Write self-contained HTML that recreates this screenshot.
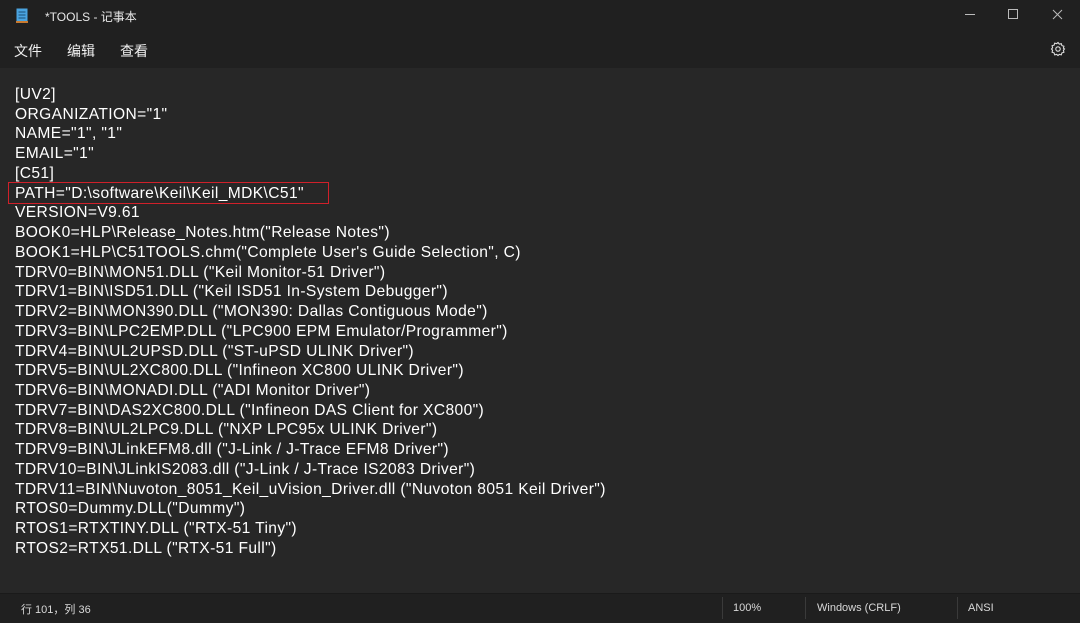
<!DOCTYPE html>
<html><head><meta charset="utf-8"><style>
*{margin:0;padding:0;box-sizing:border-box}
body{width:1080px;height:623px;background:#272727;font-family:"Segoe UI","Liberation Sans","Noto Sans CJK SC",sans-serif;color:#fff;position:relative;overflow:hidden}
.title{position:absolute;left:0;top:0;width:1080px;height:34px;background:#202020}
.menu{position:absolute;left:0;top:34px;width:1080px;height:34px;background:#202020}
.t{position:absolute;font-size:12px;color:#e8e8e8}
.m{position:absolute;top:41px;font-size:14px;color:#f0f0f0}
.ed{position:absolute;left:15px;top:85px;font-family:"Liberation Sans","Noto Sans CJK SC",sans-serif;font-size:15.6px;letter-spacing:0.38px;line-height:19.74px;white-space:pre;color:#fff}
.box{position:absolute;left:8px;top:182px;width:321px;height:22px;border:1.5px solid #d0202a}
.sb{position:absolute;left:0;top:593px;width:1080px;height:30px;background:#202020;border-top:1px solid #1a1a1a}
.s{position:absolute;top:602px;font-size:11px;color:#d8d8d8}
.sep{position:absolute;top:597px;width:1px;height:22px;background:#3a3a3a}
</style></head><body>
<div class="title"></div>
<svg style="position:absolute;left:16px;top:8px" width="12" height="15"><rect x="0.5" y="0.5" width="11" height="14" fill="#4aa3df"/><rect x="0" y="13" width="12" height="2" fill="#c87a30"/><line x1="2.5" y1="4" x2="9.5" y2="4" stroke="#1b4f77"/><line x1="2.5" y1="7" x2="9.5" y2="7" stroke="#1b4f77"/><line x1="2.5" y1="10" x2="9.5" y2="10" stroke="#1b4f77"/></svg>
<div class="t" style="left:45px;top:8px">*TOOLS - 记事本</div>
<svg style="position:absolute;left:960px;top:0" width="120" height="34" stroke="#bbb" fill="none" stroke-width="1"><line x1="5" y1="14.5" x2="15" y2="14.5"/><rect x="48.5" y="9.5" width="9" height="9"/><path d="M93 10l9 9M102 10l-9 9"/></svg>
<div class="menu"></div>
<div class="m" style="left:14px">文件</div>
<div class="m" style="left:67px">编辑</div>
<div class="m" style="left:120px">查看</div>
<svg style="position:absolute;left:1050px;top:41px" width="16" height="16" viewBox="0 0 16 16" fill="none" stroke="#ddd" stroke-width="1.1"><path d="M8 1.5l1.3 1.6 2-.5.6 2 2 .6-.5 2L14.5 8l-1.1 1.3.5 2-2 .6-.6 2-2-.5L8 14.5l-1.3-1.1-2 .5-.6-2-2-.6.5-2L1.5 8l1.1-1.3-.5-2 2-.6.6-2 2 .5z"/><circle cx="8" cy="8" r="2.2"/></svg>
<div class="ed">[UV2]
ORGANIZATION="1"
NAME="1", "1"
EMAIL="1"
[C51]
PATH="D:\software\Keil\Keil_MDK\C51"
VERSION=V9.61
BOOK0=HLP\Release_Notes.htm("Release Notes")
BOOK1=HLP\C51TOOLS.chm("Complete User's Guide Selection", C)
TDRV0=BIN\MON51.DLL ("Keil Monitor-51 Driver")
TDRV1=BIN\ISD51.DLL ("Keil ISD51 In-System Debugger")
TDRV2=BIN\MON390.DLL ("MON390: Dallas Contiguous Mode")
TDRV3=BIN\LPC2EMP.DLL ("LPC900 EPM Emulator/Programmer")
TDRV4=BIN\UL2UPSD.DLL ("ST-uPSD ULINK Driver")
TDRV5=BIN\UL2XC800.DLL ("Infineon XC800 ULINK Driver")
TDRV6=BIN\MONADI.DLL ("ADI Monitor Driver")
TDRV7=BIN\DAS2XC800.DLL ("Infineon DAS Client for XC800")
TDRV8=BIN\UL2LPC9.DLL ("NXP LPC95x ULINK Driver")
TDRV9=BIN\JLinkEFM8.dll ("J-Link / J-Trace EFM8 Driver")
TDRV10=BIN\JLinkIS2083.dll ("J-Link / J-Trace IS2083 Driver")
TDRV11=BIN\Nuvoton_8051_Keil_uVision_Driver.dll ("Nuvoton 8051 Keil Driver")
RTOS0=Dummy.DLL("Dummy")
RTOS1=RTXTINY.DLL ("RTX-51 Tiny")
RTOS2=RTX51.DLL ("RTX-51 Full")</div>
<div class="box"></div>
<div class="sb"></div>
<div class="s" style="left:21px;top:601px">行 101，列 36</div>
<div class="sep" style="left:722px"></div>
<div class="s" style="left:733px">100%</div>
<div class="sep" style="left:805px"></div>
<div class="s" style="left:817px">Windows (CRLF)</div>
<div class="sep" style="left:957px"></div>
<div class="s" style="left:968px">ANSI</div>
</body></html>
